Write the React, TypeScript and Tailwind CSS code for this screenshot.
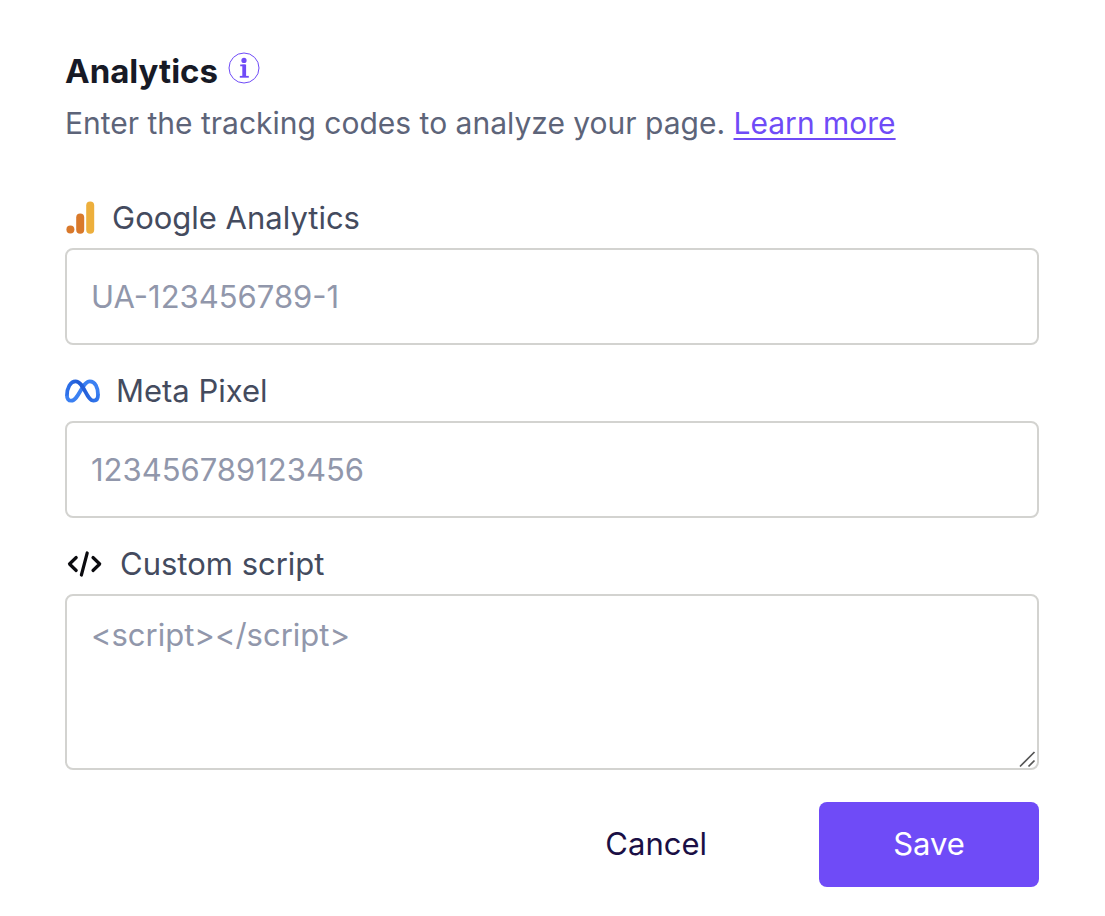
import React from 'react';

function InfoIcon() {
  return (
    <svg viewBox="0 0 32 32" className="size-8" fill="none" aria-hidden="true">
      <circle cx="16" cy="16" r="15" stroke="#6f4bf7" strokeWidth="1" />
      <circle cx="16" cy="8.4" r="2.6" fill="#6f4bf7" />
      <path d="M12.2 13.4H16.5V24" stroke="#6f4bf7" strokeWidth="1.8" />
      <path d="M16.2 12.6V25" stroke="#6f4bf7" strokeWidth="3.8" />
      <path d="M11.8 24.8H20.8" stroke="#6f4bf7" strokeWidth="1.8" />
    </svg>
  );
}

function GoogleAnalyticsIcon() {
  return (
    <svg viewBox="0 0 31 34" className="h-[34px] w-[31px]" aria-hidden="true">
      <circle cx="5.4" cy="28.6" r="4" fill="#d9792b" />
      <rect x="11.2" y="12.4" width="8" height="20.4" rx="4" fill="#d9792b" />
      <rect x="21.2" y="0.4" width="8" height="32.4" rx="4" fill="#edaf3c" />
    </svg>
  );
}

function MetaIcon() {
  return (
    <svg viewBox="0 0 36 24" className="h-6 w-[35px]" fill="none" strokeWidth="3.9" aria-hidden="true">
      <defs>
        <linearGradient id="metaBand" x1="2" y1="12" x2="34" y2="12" gradientUnits="userSpaceOnUse">
          <stop offset="0" stopColor="#2f72ea" />
          <stop offset="0.35" stopColor="#215cd6" />
          <stop offset="0.6" stopColor="#2460da" />
          <stop offset="1" stopColor="#3278ee" />
        </linearGradient>
      </defs>
      <path d="M34 16C34 8.5 31 2 25.5 2C17.5 2 14 22 6.5 22C3.5 22 2 20 2 16" stroke="#3b80f2" />
      <path d="M2 16.6C2 9 5.5 2 10.8 2C19.5 2 22 22 29.5 22C32.5 22 34 19.8 34 15.6" stroke="url(#metaBand)" />
    </svg>
  );
}

function CodeIcon() {
  return (
    <svg
      viewBox="0 0 39 28"
      className="h-7 w-[39px]"
      fill="none"
      stroke="#0b0b0f"
      strokeWidth="3.2"
      strokeLinecap="round"
      strokeLinejoin="round"
      aria-hidden="true"
    >
      <path d="M11.2 7.5L4.5 14L11.2 20.5" />
      <path d="M22.2 3L16.4 25" />
      <path d="M28 7.5L34.7 14L28 20.5" />
    </svg>
  );
}

const labelClass = 'flex h-11 items-center text-[31px] text-[#444b5e]';
const fieldClass =
  'block w-full rounded-lg border-2 border-[#d3d3d0] bg-white px-6 text-[31px] text-[#444b5e] placeholder:text-[#9197ab] placeholder:opacity-100';

export default function App() {
  return (
    <main className="bg-white pt-12 pr-[66px] pb-7 pl-[65px] font-['Inter',sans-serif]">
      <header>
        <div className="flex items-start gap-2.5">
          <h1 className="text-[33px] leading-[46px] font-bold text-[#171a26]">Analytics</h1>
          <button type="button" aria-label="About analytics" className="pt-1">
            <InfoIcon />
          </button>
        </div>
        <p className="mt-2 text-[30px] leading-[42px] text-[#5d6479]">
          Enter the tracking codes to analyze your page.{' '}
          <a href="#learn-more" className="text-[#6f4bf7] underline decoration-2 underline-offset-4">
            Learn more
          </a>
        </p>
      </header>

      <form className="mt-[52px]" onSubmit={(e) => e.preventDefault()}>
        <div className="flex flex-col gap-6">
          <div className="flex flex-col gap-2">
            <label htmlFor="ga" className={`${labelClass} gap-4`}>
              <GoogleAnalyticsIcon />
              Google Analytics
            </label>
            <input id="ga" type="text" placeholder="UA-123456789-1" className={`${fieldClass} h-[97px]`} />
          </div>
          <div className="flex flex-col gap-2">
            <label htmlFor="meta" className={`${labelClass} gap-4`}>
              <MetaIcon />
              Meta Pixel
            </label>
            <input id="meta" type="text" placeholder="123456789123456" className={`${fieldClass} h-[97px]`} />
          </div>
          <div className="flex flex-col gap-2">
            <label htmlFor="script" className={`${labelClass} gap-4`}>
              <CodeIcon />
              Custom script
            </label>
            <div className="relative">
              <textarea
                id="script"
                placeholder="<script></script>"
                className={`${fieldClass} h-44 resize-none pt-4 leading-[46px]`}
              />
              <svg
                viewBox="0 0 18 18"
                className="pointer-events-none absolute right-0.5 bottom-0.5 size-[18px]"
                stroke="#555555"
                strokeWidth="1.7"
                aria-hidden="true"
              >
                <path d="M1 16.5L15.5 2M9.5 16.5L15.5 10.5" />
              </svg>
            </div>
          </div>
        </div>
        <div className="mt-8 flex justify-end gap-2">
          <button type="button" className="h-[85px] px-[104px] text-[31px] text-[#1a0f45]">
            Cancel
          </button>
          <button type="submit" className="h-[85px] w-[220px] rounded-lg bg-[#6f4bf7] text-[31px] text-white">
            Save
          </button>
        </div>
      </form>
    </main>
  );
}
